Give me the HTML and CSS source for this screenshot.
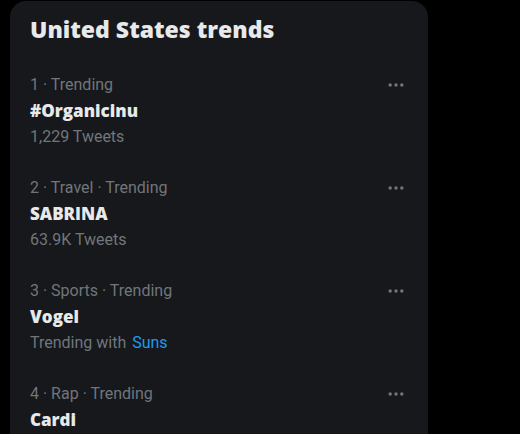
FILE: index.html
```html
<!DOCTYPE html>
<html>
<head>
<meta charset="utf-8">
<link rel="stylesheet" href="styles.css">
</head>
<body>
<section class="card">
  <h2 class="title">United States trends</h2>
  <div class="item">
    <div class="meta-row"><span class="meta">1 · Trending</span><svg class="more" viewBox="0 0 24 24"><path d="M3 12c0-1.1.9-2 2-2s2 .9 2 2-.9 2-2 2-2-.9-2-2zm9 2c1.1 0 2-.9 2-2s-.9-2-2-2-2 .9-2 2 .9 2 2 2zm7 0c1.1 0 2-.9 2-2s-.9-2-2-2-2 .9-2 2 .9 2 2 2z"/></svg></div>
    <div class="name">#Organicinu</div>
    <div class="meta">1,229 Tweets</div>
  </div>
  <div class="item">
    <div class="meta-row"><span class="meta">2 · Travel · Trending</span><svg class="more" viewBox="0 0 24 24"><path d="M3 12c0-1.1.9-2 2-2s2 .9 2 2-.9 2-2 2-2-.9-2-2zm9 2c1.1 0 2-.9 2-2s-.9-2-2-2-2 .9-2 2 .9 2 2 2zm7 0c1.1 0 2-.9 2-2s-.9-2-2-2-2 .9-2 2 .9 2 2 2z"/></svg></div>
    <div class="name">SABRINA</div>
    <div class="meta">63.9K Tweets</div>
  </div>
  <div class="item">
    <div class="meta-row"><span class="meta">3 · Sports · Trending</span><svg class="more" viewBox="0 0 24 24"><path d="M3 12c0-1.1.9-2 2-2s2 .9 2 2-.9 2-2 2-2-.9-2-2zm9 2c1.1 0 2-.9 2-2s-.9-2-2-2-2 .9-2 2 .9 2 2 2zm7 0c1.1 0 2-.9 2-2s-.9-2-2-2-2 .9-2 2 .9 2 2 2z"/></svg></div>
    <div class="name">Vogel</div>
    <div class="meta">Trending with <span class="link">Suns</span></div>
  </div>
  <div class="item">
    <div class="meta-row"><span class="meta">4 · Rap · Trending</span><svg class="more" viewBox="0 0 24 24"><path d="M3 12c0-1.1.9-2 2-2s2 .9 2 2-.9 2-2 2-2-.9-2-2zm9 2c1.1 0 2-.9 2-2s-.9-2-2-2-2 .9-2 2 .9 2 2 2zm7 0c1.1 0 2-.9 2-2s-.9-2-2-2-2 .9-2 2 .9 2 2 2z"/></svg></div>
    <div class="name">Cardi</div>
  </div>
</section>
</body>
</html>
```
FILE: styles.css
```css
html, body {
  margin: 0;
  padding: 0;
  background: #000;
  height: 100%;
  overflow: hidden;
}
body {
  font-family: Roboto, "Liberation Sans", sans-serif;
  color: #e7e9ea;
}
.card {
  margin: 1px 0 0 10px;
  width: 418px;
  background: #16181c;
  border-radius: 16px 16px 0 0;
  padding-bottom: 40px;
}
.title {
  margin: 0;
  padding: 16px 20px 19px 20px;
  font-family: "Open Sans", Roboto, sans-serif;
  font-size: 23px;
  line-height: 24px;
  font-weight: 800;
  color: #e7e9ea;
  letter-spacing: 0;
}
.item {
  padding: 12px 22px 13px 20px;
}
.meta-row {
  display: flex;
  justify-content: space-between;
  align-items: center;
}
.meta {
  font-size: 16px;
  line-height: 26px;
  color: #71767b;
}
.name {
  font-family: "Open Sans", Roboto, sans-serif;
  font-size: 17px;
  line-height: 26px;
  font-weight: 800;
  color: #e7e9ea;
}
.link {
  color: #1d9bf0;
  margin-left: 2px;
}
.more {
  width: 20px;
  height: 20px;
  fill: #71767b;
}
```
